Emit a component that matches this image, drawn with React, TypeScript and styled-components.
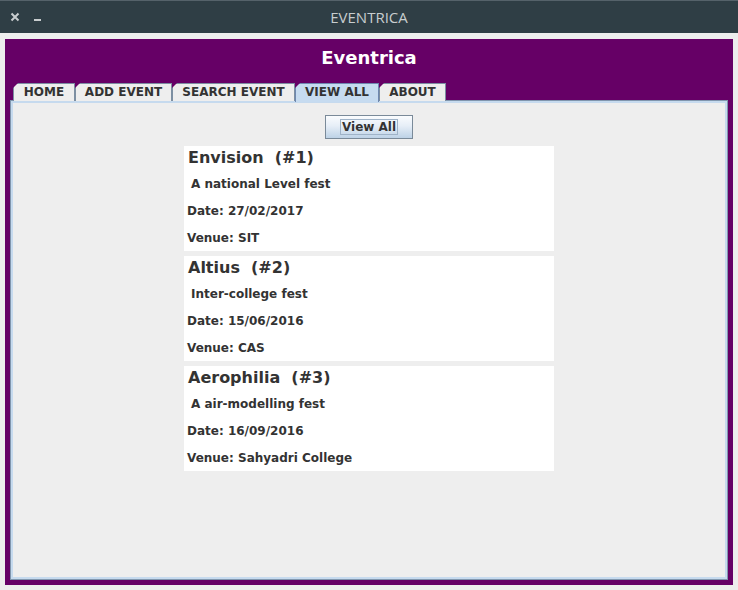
import * as React from 'react';
import styled, { createGlobalStyle, css } from 'styled-components';

interface EventItem {
  id: number;
  name: string;
  description: string;
  date: string;
  venue: string;
}

const events: EventItem[] = [
  { id: 1, name: 'Envision', description: 'A national Level fest', date: '27/02/2017', venue: 'SIT' },
  { id: 2, name: 'Altius', description: 'Inter-college fest', date: '15/06/2016', venue: 'CAS' },
  { id: 3, name: 'Aerophilia', description: 'A air-modelling fest', date: '16/09/2016', venue: 'Sahyadri College' }
];

// label + width, widths follow the Swing tab metrics
const tabs = [
  { label: 'HOME', width: 62 },
  { label: 'ADD EVENT', width: 97 },
  { label: 'SEARCH EVENT', width: 123 },
  { label: 'VIEW ALL', width: 84 },
  { label: 'ABOUT', width: 67 }
];

const purple = '#660066';
const uiFont = `"DejaVu Sans", "Liberation Sans", sans-serif`;

const GlobalStyle = createGlobalStyle`
  html, body {
    margin: 0;
    padding: 0;
    background: #ededed;
  }
`;

const Window = styled('div')`
  width: 738px;
  height: 590px;
  display: flex;
  flex-direction: column;
  background: #ededed;
  overflow: hidden;
`;

const TitleBar = styled('div')`
  height: 33px;
  flex: none;
  display: grid;
  grid-template-columns: 1fr auto 1fr;
  align-items: center;
  background: #2f3e45;
  border-top: 1px solid #55626a;
  box-sizing: border-box;
`;

const Controls = styled('div')`
  display: flex;
  align-items: center;
  gap: 13px;
  padding-left: 10px;
  color: #c9cdcf;
`;

const ControlIcon = styled('svg')`
  display: block;
`;

const WindowTitle = styled('div')`
  font-family: "Open Sans", "Noto Sans", sans-serif;
  font-size: 15px;
  color: #c8cdcf;
`;

const Frame = styled('div')`
  flex: 1;
  display: flex;
  padding: 6px 5px 5px;
`;

const MainPanel = styled('div')`
  flex: 1;
  display: flex;
  flex-direction: column;
  background: ${purple};
`;

const Heading = styled('h1')`
  margin: 0;
  height: 45px;
  display: flex;
  align-items: center;
  justify-content: center;
  padding-bottom: 8px;
  box-sizing: border-box;
  font-family: ${uiFont};
  font-weight: 700;
  font-size: 18px;
  color: #ffffff;
`;

const TabRow = styled('div')`
  display: flex;
  align-items: flex-end;
  height: 17px;
  padding-left: 8px;
  margin-bottom: -1px;
  position: relative;
  z-index: 1;
`;

const Tab = styled('div')<{ selected?: boolean; width: number }>`
  position: relative;
  width: ${props => props.width}px;
  height: 18px;
  box-sizing: border-box;
  border: 1px solid #7d8fa2;
  border-bottom: none;
  background: #eeeeee;
  font-family: ${uiFont};
  font-weight: 700;
  font-size: 12px;
  line-height: 17px;
  text-align: center;
  color: #333333;
  white-space: nowrap;

  &::before {
    content: '';
    position: absolute;
    top: -1px;
    left: -1px;
    width: 0;
    height: 0;
    border-top: 5px solid ${purple};
    border-right: 5px solid transparent;
  }

  ${props =>
    props.selected &&
    css`
      height: 19px;
      margin-bottom: -1px;
      background: #c6dbf0;
      border-color: #6f88b0;
    `}
`;

const ContentPanel = styled('div')`
  flex: 1;
  margin: 0 5px 5px;
  display: flex;
  flex-direction: column;
  align-items: center;
  padding-top: 14px;
  background: #eeeeee;
  border: 1px solid #8196ad;
  box-shadow: inset 0 0 0 2px #c6daee;
`;

const ViewButton = styled('button')`
  box-sizing: border-box;
  width: 88px;
  height: 24px;
  padding: 0;
  display: flex;
  align-items: center;
  justify-content: center;
  border: 1px solid #7a8a99;
  background: linear-gradient(#fafcfe 0%, #e6eef7 45%, #bdd2e6 100%);
  font-family: ${uiFont};
  font-weight: 700;
  font-size: 12px;
  color: #333333;
  cursor: pointer;
`;

const FocusLabel = styled('span')`
  border: 1px solid #9fb3c8;
  padding: 0 1px;
  line-height: 14px;
`;

const CardList = styled('div')`
  display: flex;
  flex-direction: column;
  gap: 5px;
  margin-top: 7px;
`;

const Card = styled('div')`
  width: 370px;
  height: 105px;
  box-sizing: border-box;
  padding: 1px 4px 0 3px;
  background: #ffffff;
  font-family: ${uiFont};
  color: #333333;
`;

const CardTitle = styled('div')`
  font-weight: 700;
  font-size: 16px;
  line-height: 22px;
  padding-left: 1px;
  white-space: pre;
`;

const CardLine = styled('div')<{ indent?: boolean }>`
  margin-top: 3px;
  font-weight: 700;
  font-size: 12px;
  line-height: 24px;
  padding-left: ${props => (props.indent ? 4 : 0)}px;
`;

export default function App() {
  return (
    <Window>
      <GlobalStyle />
      <TitleBar>
        <Controls>
          <ControlIcon width="10" height="10" viewBox="0 0 10 10">
            <path d="M1.5 1.5 L8.5 8.5 M8.5 1.5 L1.5 8.5" stroke="currentColor" strokeWidth="2" />
          </ControlIcon>
          <ControlIcon width="9" height="10" viewBox="0 0 9 10">
            <rect x="1" y="7" width="7" height="2" fill="currentColor" />
          </ControlIcon>
        </Controls>
        <WindowTitle>EVENTRICA</WindowTitle>
        <div />
      </TitleBar>
      <Frame>
        <MainPanel>
          <Heading>Eventrica</Heading>
          <TabRow>
            {tabs.map(tab => (
              <Tab key={tab.label} width={tab.width} selected={tab.label === 'VIEW ALL'}>
                {tab.label}
              </Tab>
            ))}
          </TabRow>
          <ContentPanel>
            <ViewButton>
              <FocusLabel>View All</FocusLabel>
            </ViewButton>
            <CardList>
              {events.map(ev => (
                <Card key={ev.id}>
                  <CardTitle>{`${ev.name}  (#${ev.id})`}</CardTitle>
                  <CardLine indent>{ev.description}</CardLine>
                  <CardLine>Date: {ev.date}</CardLine>
                  <CardLine>Venue: {ev.venue}</CardLine>
                </Card>
              ))}
            </CardList>
          </ContentPanel>
        </MainPanel>
      </Frame>
    </Window>
  );
}
